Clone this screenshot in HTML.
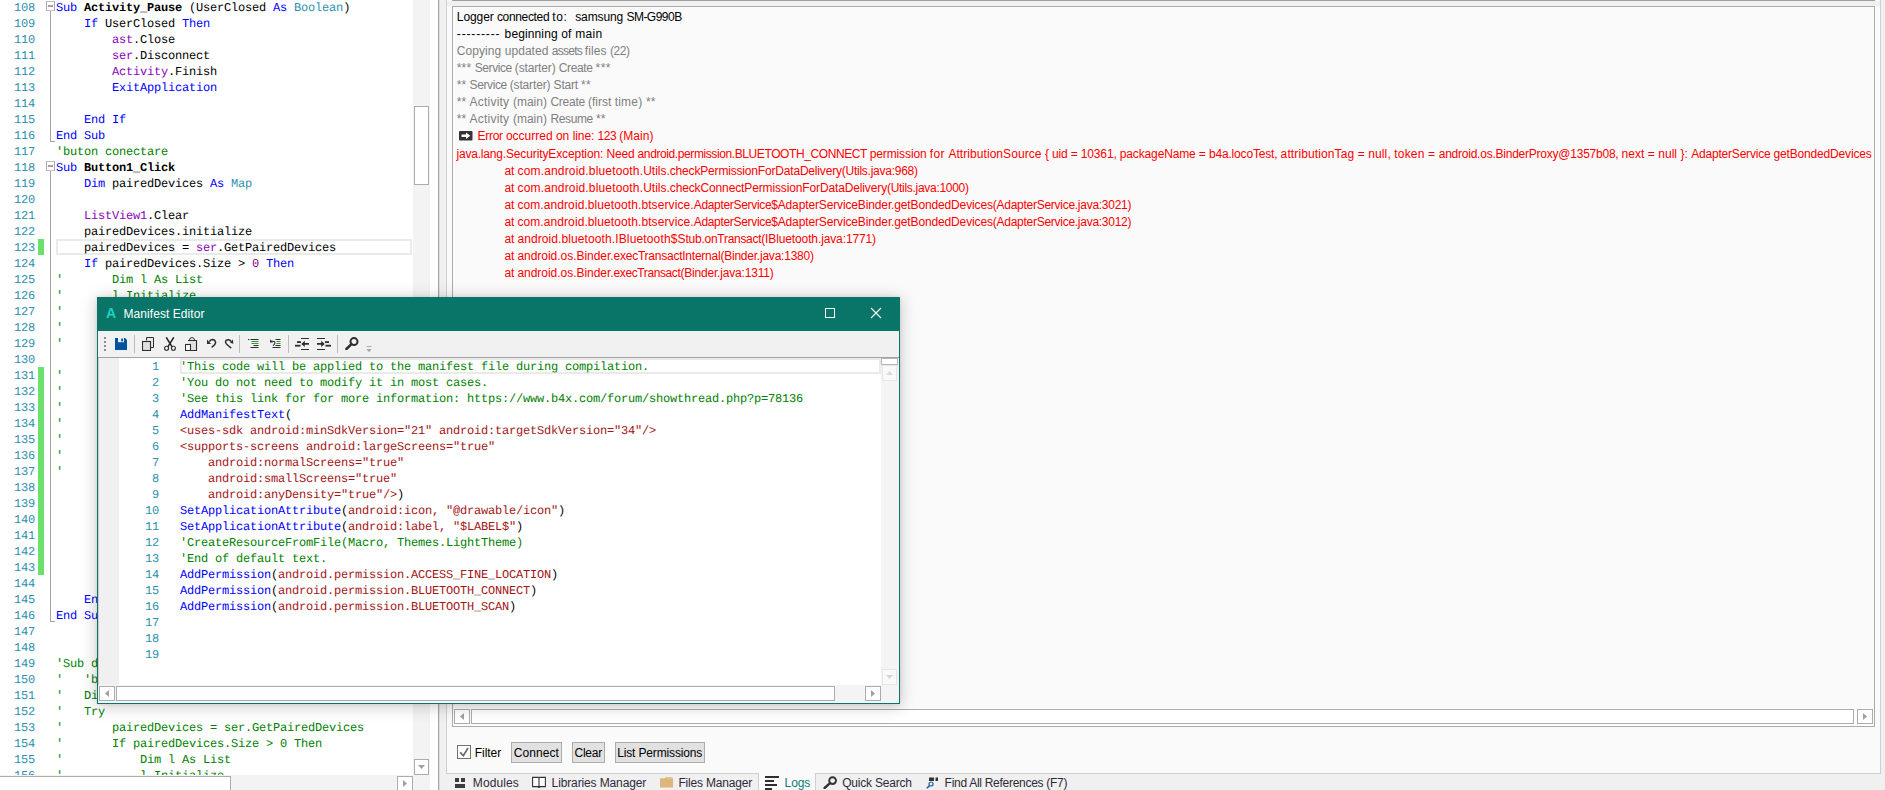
<!DOCTYPE html>
<html><head><meta charset="utf-8"><title>Manifest Editor</title>
<style>
html,body{margin:0;padding:0}
body{width:1885px;height:790px;overflow:hidden;background:#fff;position:relative;font-family:"Liberation Sans",sans-serif}
.a{position:absolute}
.m{font-family:"Liberation Mono",monospace;font-size:12px;letter-spacing:-0.2px;white-space:pre;line-height:16px;text-rendering:geometricPrecision}
.ln{position:absolute;left:0;height:16px;white-space:pre}
.num{position:absolute;color:#2b91af;text-align:right}
.kw{color:#0000ff}.ty{color:#2b91af}.id{color:#8c00be}.cm{color:#008000}.nm{color:#800080}.b{font-weight:bold}
.st{color:#a31515}
.s{font-family:"Liberation Sans",sans-serif;font-size:12px;white-space:pre;position:absolute;line-height:17px;height:17px}
.sb{background:#fff;border:1px solid #acacac;box-sizing:border-box}
</style></head><body>
<div class="a" id="ed" style="left:0;top:0;width:413px;height:775px;overflow:hidden;background:#fff"><div class="a" style="left:50px;top:11px;width:1px;height:131px;background:#a5a5a5"></div><div class="a" style="left:50px;top:141px;width:5px;height:1px;background:#a5a5a5"></div><div class="a" style="left:50px;top:171px;width:1px;height:451px;background:#a5a5a5"></div><div class="a" style="left:50px;top:621px;width:5px;height:1px;background:#a5a5a5"></div><div class="a" style="left:46px;top:1px;width:9px;height:10px;box-sizing:border-box;border:1px solid #a9a9a9;border-top-color:#c2c2c2;border-bottom-color:#c2c2c2;background:#fff"></div><div class="a" style="left:48px;top:5px;width:5px;height:2px;background:#a2a2a2"></div><div class="a" style="left:46px;top:161px;width:9px;height:10px;box-sizing:border-box;border:1px solid #a9a9a9;border-top-color:#c2c2c2;border-bottom-color:#c2c2c2;background:#fff"></div><div class="a" style="left:48px;top:165px;width:5px;height:2px;background:#a2a2a2"></div><div class="a" style="left:38px;top:239px;width:6px;height:16px;background:#6ce06c"></div><div class="a" style="left:38px;top:367px;width:6px;height:208px;background:#6ce06c"></div><div class="a" style="left:56px;top:239px;width:356px;height:16px;box-sizing:border-box;border:2px solid #eaeaea"></div><div class="ln m" style="top:0px"><span class="num" style="left:14px;width:21px">108</span><span class="a" style="left:56px"><span class="kw">Sub</span> <span class="b">Activity_Pause</span> (UserClosed <span class="kw">As</span> <span class="ty">Boolean</span>)</span></div><div class="ln m" style="top:16px"><span class="num" style="left:14px;width:21px">109</span><span class="a" style="left:56px">    <span class="kw">If</span> UserClosed <span class="kw">Then</span></span></div><div class="ln m" style="top:32px"><span class="num" style="left:14px;width:21px">110</span><span class="a" style="left:56px">        <span class="id">ast</span>.Close</span></div><div class="ln m" style="top:48px"><span class="num" style="left:14px;width:21px">111</span><span class="a" style="left:56px">        <span class="id">ser</span>.Disconnect</span></div><div class="ln m" style="top:64px"><span class="num" style="left:14px;width:21px">112</span><span class="a" style="left:56px">        <span class="id">Activity</span>.Finish</span></div><div class="ln m" style="top:80px"><span class="num" style="left:14px;width:21px">113</span><span class="a" style="left:56px">        <span class="kw">ExitApplication</span></span></div><div class="ln m" style="top:96px"><span class="num" style="left:14px;width:21px">114</span><span class="a" style="left:56px"></span></div><div class="ln m" style="top:112px"><span class="num" style="left:14px;width:21px">115</span><span class="a" style="left:56px">    <span class="kw">End If</span></span></div><div class="ln m" style="top:128px"><span class="num" style="left:14px;width:21px">116</span><span class="a" style="left:56px"><span class="kw">End Sub</span></span></div><div class="ln m" style="top:144px"><span class="num" style="left:14px;width:21px">117</span><span class="a" style="left:56px"><span class="cm">&#x27;buton conectare</span></span></div><div class="ln m" style="top:160px"><span class="num" style="left:14px;width:21px">118</span><span class="a" style="left:56px"><span class="kw">Sub</span> <span class="b">Button1_Click</span></span></div><div class="ln m" style="top:176px"><span class="num" style="left:14px;width:21px">119</span><span class="a" style="left:56px">    <span class="kw">Dim</span> pairedDevices <span class="kw">As</span> <span class="ty">Map</span></span></div><div class="ln m" style="top:192px"><span class="num" style="left:14px;width:21px">120</span><span class="a" style="left:56px"></span></div><div class="ln m" style="top:208px"><span class="num" style="left:14px;width:21px">121</span><span class="a" style="left:56px">    <span class="id">ListView1</span>.Clear</span></div><div class="ln m" style="top:224px"><span class="num" style="left:14px;width:21px">122</span><span class="a" style="left:56px">    pairedDevices.initialize</span></div><div class="ln m" style="top:240px"><span class="num" style="left:14px;width:21px">123</span><span class="a" style="left:56px">    pairedDevices = <span class="id">ser</span>.GetPairedDevices</span></div><div class="ln m" style="top:256px"><span class="num" style="left:14px;width:21px">124</span><span class="a" style="left:56px">    <span class="kw">If</span> pairedDevices.Size &gt; <span class="nm">0</span> <span class="kw">Then</span></span></div><div class="ln m" style="top:272px"><span class="num" style="left:14px;width:21px">125</span><span class="a" style="left:56px"><span class="cm">&#x27;       Dim l As List</span></span></div><div class="ln m" style="top:288px"><span class="num" style="left:14px;width:21px">126</span><span class="a" style="left:56px"><span class="cm">&#x27;       l.Initialize</span></span></div><div class="ln m" style="top:304px"><span class="num" style="left:14px;width:21px">127</span><span class="a" style="left:56px"><span class="cm">&#x27;</span></span></div><div class="ln m" style="top:320px"><span class="num" style="left:14px;width:21px">128</span><span class="a" style="left:56px"><span class="cm">&#x27;</span></span></div><div class="ln m" style="top:336px"><span class="num" style="left:14px;width:21px">129</span><span class="a" style="left:56px"><span class="cm">&#x27;</span></span></div><div class="ln m" style="top:352px"><span class="num" style="left:14px;width:21px">130</span><span class="a" style="left:56px"></span></div><div class="ln m" style="top:368px"><span class="num" style="left:14px;width:21px">131</span><span class="a" style="left:56px"><span class="cm">&#x27;</span></span></div><div class="ln m" style="top:384px"><span class="num" style="left:14px;width:21px">132</span><span class="a" style="left:56px"><span class="cm">&#x27;</span></span></div><div class="ln m" style="top:400px"><span class="num" style="left:14px;width:21px">133</span><span class="a" style="left:56px"><span class="cm">&#x27;</span></span></div><div class="ln m" style="top:416px"><span class="num" style="left:14px;width:21px">134</span><span class="a" style="left:56px"><span class="cm">&#x27;</span></span></div><div class="ln m" style="top:432px"><span class="num" style="left:14px;width:21px">135</span><span class="a" style="left:56px"><span class="cm">&#x27;</span></span></div><div class="ln m" style="top:448px"><span class="num" style="left:14px;width:21px">136</span><span class="a" style="left:56px"><span class="cm">&#x27;</span></span></div><div class="ln m" style="top:464px"><span class="num" style="left:14px;width:21px">137</span><span class="a" style="left:56px"><span class="cm">&#x27;</span></span></div><div class="ln m" style="top:480px"><span class="num" style="left:14px;width:21px">138</span><span class="a" style="left:56px"></span></div><div class="ln m" style="top:496px"><span class="num" style="left:14px;width:21px">139</span><span class="a" style="left:56px"></span></div><div class="ln m" style="top:512px"><span class="num" style="left:14px;width:21px">140</span><span class="a" style="left:56px"></span></div><div class="ln m" style="top:528px"><span class="num" style="left:14px;width:21px">141</span><span class="a" style="left:56px"></span></div><div class="ln m" style="top:544px"><span class="num" style="left:14px;width:21px">142</span><span class="a" style="left:56px"></span></div><div class="ln m" style="top:560px"><span class="num" style="left:14px;width:21px">143</span><span class="a" style="left:56px"></span></div><div class="ln m" style="top:576px"><span class="num" style="left:14px;width:21px">144</span><span class="a" style="left:56px"></span></div><div class="ln m" style="top:592px"><span class="num" style="left:14px;width:21px">145</span><span class="a" style="left:56px">    <span class="kw">En</span></span></div><div class="ln m" style="top:608px"><span class="num" style="left:14px;width:21px">146</span><span class="a" style="left:56px"><span class="kw">End Su</span></span></div><div class="ln m" style="top:624px"><span class="num" style="left:14px;width:21px">147</span><span class="a" style="left:56px"></span></div><div class="ln m" style="top:640px"><span class="num" style="left:14px;width:21px">148</span><span class="a" style="left:56px"></span></div><div class="ln m" style="top:656px"><span class="num" style="left:14px;width:21px">149</span><span class="a" style="left:56px"><span class="cm">&#x27;Sub d</span></span></div><div class="ln m" style="top:672px"><span class="num" style="left:14px;width:21px">150</span><span class="a" style="left:56px"><span class="cm">&#x27;   &#x27;b</span></span></div><div class="ln m" style="top:688px"><span class="num" style="left:14px;width:21px">151</span><span class="a" style="left:56px"><span class="cm">&#x27;   Di</span></span></div><div class="ln m" style="top:704px"><span class="num" style="left:14px;width:21px">152</span><span class="a" style="left:56px"><span class="cm">&#x27;   Try</span></span></div><div class="ln m" style="top:720px"><span class="num" style="left:14px;width:21px">153</span><span class="a" style="left:56px"><span class="cm">&#x27;       pairedDevices = ser.GetPairedDevices</span></span></div><div class="ln m" style="top:736px"><span class="num" style="left:14px;width:21px">154</span><span class="a" style="left:56px"><span class="cm">&#x27;       If pairedDevices.Size &gt; 0 Then</span></span></div><div class="ln m" style="top:752px"><span class="num" style="left:14px;width:21px">155</span><span class="a" style="left:56px"><span class="cm">&#x27;           Dim l As List</span></span></div><div class="ln m" style="top:768px"><span class="num" style="left:14px;width:21px">156</span><span class="a" style="left:56px"><span class="cm">&#x27;           l.Initialize</span></span></div></div><div class="a" style="left:413px;top:0;width:17px;height:790px;background:#f3f3f3"></div><div class="a sb" style="left:414px;top:106px;width:15px;height:79px"></div><div class="a sb" style="left:414px;top:759px;width:15px;height:16px"></div><svg class="a" style="left:418px;top:765px" width="8" height="5"><path d="M0 0H7L3.5 4Z" fill="#a0a0a0"/></svg><div class="a" style="left:0;top:775px;width:413px;height:15px;background:#f3f3f3"></div><div class="a sb" style="left:-1px;top:776px;width:232px;height:16px"></div><div class="a sb" style="left:397px;top:776px;width:16px;height:16px"></div><svg class="a" style="left:403px;top:780px" width="5" height="8"><path d="M0 0V7L4 3.5Z" fill="#a0a0a0"/></svg><div class="a" style="left:430px;top:0;width:8px;height:790px;background:#fff"></div><div class="a" style="left:438px;top:0;width:1447px;height:790px;background:#f0f0f0"></div><div class="a" style="left:438px;top:0;width:1px;height:790px;background:#a6a6a6"></div><div class="a" style="left:439px;top:0;width:1px;height:790px;background:#dcdcdc"></div><div class="a" style="left:446px;top:-1px;width:1435px;height:775px;box-sizing:border-box;border:1px solid #cfcfcf;background:#fafafa"></div><div class="a" style="left:447px;top:1px;width:1433px;height:5px;background:#f0f0f0"></div><div class="a" style="left:452px;top:0;width:1423px;height:1px;background:#a0a0a0"></div><div class="a" style="left:452px;top:6px;width:1423px;height:721px;box-sizing:border-box;border:1px solid #ababab;background:#fafafa"></div><div class="a" style="left:453px;top:708px;width:1421px;height:18px;background:#fdfdfd"></div><div class="a sb" style="left:454px;top:709px;width:16px;height:15px"></div><svg class="a" style="left:460px;top:713px" width="5" height="8"><path d="M4 0V7L0 3.5Z" fill="#a0a0a0"/></svg><div class="a sb" style="left:471px;top:709px;width:1383px;height:15px"></div><div class="a sb" style="left:1857px;top:709px;width:16px;height:15px"></div><svg class="a" style="left:1863px;top:713px" width="5" height="8"><path d="M0 0V7L4 3.5Z" fill="#a0a0a0"/></svg><div class="s" style="left:456.8px;top:9px;color:#000;letter-spacing:-0.086px">Logger </div><div class="s" style="left:496.9px;top:9px;color:#000;letter-spacing:-0.332px">connected </div><div class="s" style="left:552.3px;top:9px;color:#000;letter-spacing:0.577px">to:  </div><div class="s" style="left:575.2px;top:9px;color:#000;letter-spacing:-0.104px">samsung </div><div class="s" style="left:626.4px;top:9px;color:#000;letter-spacing:-0.507px">SM-G990B</div><div class="s" style="left:456.8px;top:26px;color:#000;letter-spacing:0.849px">--------- </div><div class="s" style="left:504.6px;top:26px;color:#000;letter-spacing:0.121px">beginning </div><div class="s" style="left:561.2px;top:26px;color:#000;letter-spacing:0.219px">of </div><div class="s" style="left:575.2px;top:26px;color:#000;letter-spacing:0.346px">main</div><div class="s" style="left:456.8px;top:43px;color:#808080;letter-spacing:0.078px">Copying </div><div class="s" style="left:504.8px;top:43px;color:#808080;letter-spacing:0.023px">updated </div><div class="s" style="left:551.7px;top:43px;color:#808080;letter-spacing:-0.702px">assets </div><div class="s" style="left:584.8px;top:43px;color:#808080;letter-spacing:0.069px">files </div><div class="s" style="left:609.9px;top:43px;color:#808080;letter-spacing:-0.436px">(22)</div><div class="s" style="left:456.8px;top:60px;color:#808080;letter-spacing:0.139px">*** </div><div class="s" style="left:474.7px;top:60px;color:#808080;letter-spacing:-0.407px">Service </div><div class="s" style="left:514.8px;top:60px;color:#808080;letter-spacing:-0.144px">(starter) </div><div class="s" style="left:558.7px;top:60px;color:#808080;letter-spacing:-0.351px">Create </div><div class="s" style="left:595.6px;top:60px;color:#808080;letter-spacing:0.428px">***</div><div class="s" style="left:456.8px;top:77px;color:#808080;letter-spacing:0.037px">** </div><div class="s" style="left:469.6px;top:77px;color:#808080;letter-spacing:-0.407px">Service </div><div class="s" style="left:509.7px;top:77px;color:#808080;letter-spacing:-0.144px">(starter) </div><div class="s" style="left:553.6px;top:77px;color:#808080;letter-spacing:-0.215px">Start </div><div class="s" style="left:581.0px;top:77px;color:#808080;letter-spacing:0.278px">**</div><div class="s" style="left:456.8px;top:94px;color:#808080;letter-spacing:0.037px">** </div><div class="s" style="left:469.6px;top:94px;color:#808080;letter-spacing:0.217px">Activity </div><div class="s" style="left:512.9px;top:94px;color:#808080;letter-spacing:0.022px">(main) </div><div class="s" style="left:550.4px;top:94px;color:#808080;letter-spacing:-0.251px">Create </div><div class="s" style="left:588.0px;top:94px;color:#808080;letter-spacing:0.004px">(first </div><div class="s" style="left:614.7px;top:94px;color:#808080;letter-spacing:0.200px">time) </div><div class="s" style="left:645.9px;top:94px;color:#808080;letter-spacing:0.278px">**</div><div class="s" style="left:456.8px;top:111px;color:#808080;letter-spacing:0.037px">** </div><div class="s" style="left:469.6px;top:111px;color:#808080;letter-spacing:0.217px">Activity </div><div class="s" style="left:512.9px;top:111px;color:#808080;letter-spacing:0.022px">(main) </div><div class="s" style="left:550.4px;top:111px;color:#808080;letter-spacing:-0.362px">Resume </div><div class="s" style="left:595.9px;top:111px;color:#808080;letter-spacing:0.278px">**</div><div class="s" style="left:477.5px;top:128px;color:#ff0000;letter-spacing:-0.267px">Error </div><div class="s" style="left:505.9px;top:128px;color:#ff0000;letter-spacing:-0.003px">occurred </div><div class="s" style="left:555.9px;top:128px;color:#ff0000;letter-spacing:0.037px">on </div><div class="s" style="left:572.7px;top:128px;color:#ff0000;letter-spacing:-0.093px">line: </div><div class="s" style="left:597.5px;top:128px;color:#ff0000;letter-spacing:-0.415px">123 </div><div class="s" style="left:619.2px;top:128px;color:#ff0000;letter-spacing:0.081px">(Main)</div><div class="s" style="left:456.5px;top:146px;color:#ff0000;letter-spacing:-0.198px">java.lang.</div><div class="s" style="left:505.9px;top:146px;color:#ff0000;letter-spacing:-0.112px">SecurityException: </div><div class="s" style="left:606.5px;top:146px;color:#ff0000;letter-spacing:-0.186px">Need </div><div class="s" style="left:637.6px;top:146px;color:#ff0000;letter-spacing:-0.402px">android.permission.BLUETOOTH_CONNECT </div><div class="s" style="left:869.7px;top:146px;color:#ff0000;letter-spacing:-0.114px">permission </div><div class="s" style="left:929.8px;top:146px;color:#ff0000;letter-spacing:0.314px">for </div><div class="s" style="left:948.4px;top:146px;color:#ff0000;letter-spacing:0.062px">AttributionSource </div><div class="s" style="left:1044.9px;top:146px;color:#ff0000;letter-spacing:-0.145px">{ uid = 10361, </div><div class="s" style="left:1119.8px;top:146px;color:#ff0000;letter-spacing:-0.140px">packageName = </div><div class="s" style="left:1208.9px;top:146px;color:#ff0000;letter-spacing:-0.168px">b4a.locoTest, </div><div class="s" style="left:1280.6px;top:146px;color:#ff0000;letter-spacing:0.114px">attributionTag = null, </div><div class="s" style="left:1394.3px;top:146px;color:#ff0000;letter-spacing:0.171px">token = </div><div class="s" style="left:1438.7px;top:146px;color:#ff0000;letter-spacing:-0.232px">android.os.BinderProxy@1357b08, </div><div class="s" style="left:1621.6px;top:146px;color:#ff0000;letter-spacing:0.037px">next = null }: </div><div class="s" style="left:1691.2px;top:146px;color:#ff0000;letter-spacing:-0.199px">AdapterService </div><div class="s" style="left:1773.6px;top:146px;color:#ff0000;letter-spacing:-0.171px">getBondedDevices</div><div class="s" style="left:504.5px;top:163px;color:#ff0000;letter-spacing:-0.115px">at </div><div class="s" style="left:517.5px;top:163px;color:#ff0000;letter-spacing:0.164px">com.android.bluetooth.</div><div class="s" style="left:643.2px;top:163px;color:#ff0000;letter-spacing:-0.012px">Utils.</div><div class="s" style="left:669.8px;top:163px;color:#ff0000;letter-spacing:-0.180px">checkPermissionForDataDelivery</div><div class="s" style="left:841.8px;top:163px;color:#ff0000;letter-spacing:-0.258px">(Utils.java:968)</div><div class="s" style="left:504.5px;top:180px;color:#ff0000;letter-spacing:-0.115px">at </div><div class="s" style="left:517.5px;top:180px;color:#ff0000;letter-spacing:0.164px">com.android.bluetooth.</div><div class="s" style="left:643.2px;top:180px;color:#ff0000;letter-spacing:-0.012px">Utils.</div><div class="s" style="left:669.8px;top:180px;color:#ff0000;letter-spacing:-0.132px">checkConnectPermissionForDataDelivery</div><div class="s" style="left:887.0px;top:180px;color:#ff0000;letter-spacing:-0.294px">(Utils.java:1000)</div><div class="s" style="left:504.5px;top:197px;color:#ff0000;letter-spacing:-0.148px">at </div><div class="s" style="left:517.4px;top:197px;color:#ff0000;letter-spacing:0.089px">com.android.bluetooth.btservice.</div><div class="s" style="left:693.7px;top:197px;color:#ff0000;letter-spacing:-0.315px">AdapterService$</div><div class="s" style="left:777.7px;top:197px;color:#ff0000;letter-spacing:-0.134px">AdapterServiceBinder.</div><div class="s" style="left:894.3px;top:197px;color:#ff0000;letter-spacing:-0.140px">getBondedDevices</div><div class="s" style="left:992.8px;top:197px;color:#ff0000;letter-spacing:-0.270px">(AdapterService.java:3021)</div><div class="s" style="left:504.5px;top:214px;color:#ff0000;letter-spacing:-0.148px">at </div><div class="s" style="left:517.4px;top:214px;color:#ff0000;letter-spacing:0.089px">com.android.bluetooth.btservice.</div><div class="s" style="left:693.7px;top:214px;color:#ff0000;letter-spacing:-0.315px">AdapterService$</div><div class="s" style="left:777.7px;top:214px;color:#ff0000;letter-spacing:-0.134px">AdapterServiceBinder.</div><div class="s" style="left:894.3px;top:214px;color:#ff0000;letter-spacing:-0.140px">getBondedDevices</div><div class="s" style="left:992.8px;top:214px;color:#ff0000;letter-spacing:-0.270px">(AdapterService.java:3012)</div><div class="s" style="left:504.5px;top:231px;color:#ff0000;letter-spacing:-0.148px">at </div><div class="s" style="left:517.4px;top:231px;color:#ff0000;letter-spacing:0.096px">android.bluetooth.</div><div class="s" style="left:615.2px;top:231px;color:#ff0000;letter-spacing:0.153px">IBluetooth$</div><div class="s" style="left:677.6px;top:231px;color:#ff0000;letter-spacing:-0.206px">Stub.</div><div class="s" style="left:704.6px;top:231px;color:#ff0000;letter-spacing:-0.299px">onTransact</div><div class="s" style="left:761.2px;top:231px;color:#ff0000;letter-spacing:-0.119px">(IBluetooth.java:1771)</div><div class="s" style="left:504.5px;top:248px;color:#ff0000;letter-spacing:-0.148px">at </div><div class="s" style="left:517.4px;top:248px;color:#ff0000;letter-spacing:-0.025px">android.os.</div><div class="s" style="left:576.5px;top:248px;color:#ff0000;letter-spacing:-0.051px">Binder.</div><div class="s" style="left:613.5px;top:248px;color:#ff0000;letter-spacing:-0.235px">execTransactInternal</div><div class="s" style="left:720.4px;top:248px;color:#ff0000;letter-spacing:-0.223px">(Binder.java:1380)</div><div class="s" style="left:504.5px;top:265px;color:#ff0000;letter-spacing:-0.148px">at </div><div class="s" style="left:517.4px;top:265px;color:#ff0000;letter-spacing:-0.025px">android.os.</div><div class="s" style="left:576.5px;top:265px;color:#ff0000;letter-spacing:-0.051px">Binder.</div><div class="s" style="left:613.5px;top:265px;color:#ff0000;letter-spacing:-0.391px">execTransact</div><div class="s" style="left:680.4px;top:265px;color:#ff0000;letter-spacing:-0.184px">(Binder.java:1311)</div><svg class="a" style="left:459px;top:131px" width="14" height="10" viewBox="0 0 14 10"><rect x="0" y="0" width="13.5" height="9.5" rx="1" fill="#333"/><path d="M2.5 3.6H7V1.6L11.3 4.8L7 8V6H2.5Z" fill="#fff"/></svg><div class="a" style="left:457px;top:745px;width:14px;height:14px;box-sizing:border-box;border:1px solid #707070;background:#fff"></div><svg class="a" style="left:457px;top:745px" width="14" height="14"><path d="M3.1 7.3L6.4 10.7L11 3" stroke="#6a6a6a" stroke-width="1.7" fill="none"/></svg><div class="s" style="left:474.7px;top:745px;color:#000;letter-spacing:-0.029px;">Filter</div><div class="a" style="left:511px;top:742px;width:51px;height:21px;box-sizing:border-box;border:1px solid #adadad;background:#e1e1e1"></div><div class="s" style="left:513.7px;top:745px;color:#000;letter-spacing:0.071px;">Connect</div><div class="a" style="left:572px;top:742px;width:33px;height:21px;box-sizing:border-box;border:1px solid #adadad;background:#e1e1e1"></div><div class="s" style="left:574.6px;top:745px;color:#000;letter-spacing:-0.277px;">Clear</div><div class="a" style="left:615px;top:742px;width:90px;height:21px;box-sizing:border-box;border:1px solid #adadad;background:#e1e1e1"></div><div class="s" style="left:617.2px;top:745px;color:#000;letter-spacing:-0.147px;">List Permissions</div><div class="a" style="left:758px;top:773px;width:58px;height:17px;background:#fafafa;border-left:1px solid #cfcfcf;border-right:1px solid #cfcfcf;box-sizing:border-box"></div><div class="s" style="left:472.8px;top:775px;color:#2f2a38;letter-spacing:0.106px;">Modules</div><div class="s" style="left:551.6px;top:775px;color:#2f2a38;letter-spacing:-0.125px;">Libraries Manager</div><div class="s" style="left:678.4000000000001px;top:775px;color:#2f2a38;letter-spacing:-0.172px;">Files Manager</div><div class="s" style="left:784.6px;top:775px;color:#0b7c74;letter-spacing:-0.108px;">Logs</div><div class="s" style="left:842.2px;top:775px;color:#2f2a38;letter-spacing:-0.211px;">Quick Search</div><div class="s" style="left:944.6px;top:775px;color:#2f2a38;letter-spacing:-0.283px;">Find All References (F7)</div><svg class="a" style="left:455px;top:778px" width="10" height="10"><rect x="0" y="0" width="4" height="4" fill="#3c3c3c"/><rect x="6" y="0" width="4" height="4" fill="#3c3c3c"/><rect x="0" y="6" width="10" height="4" fill="#3c3c3c"/></svg><svg class="a" style="left:532px;top:776px" width="14" height="12" viewBox="0 0 14 12"><path d="M0.6 1.4H6.2Q7 1.4 7 2.2V10.6H0.6ZM7 2.2Q7 1.4 7.8 1.4H13.4V10.6H7" fill="#fff" stroke="#333" stroke-width="1.1"/><path d="M6.2 10.6V11.6H7.8V10.6" fill="#333" stroke="#333" stroke-width=".6"/></svg><svg class="a" style="left:660px;top:776px" width="14" height="12" viewBox="0 0 14 12"><path d="M0 2.2H5L6 1H12.3V2.2H13V11.6H0Z" fill="#dcb67a"/><path d="M6.2 1.9H12" stroke="#efd9b0" stroke-width=".8"/></svg><svg class="a" style="left:765px;top:776px" width="14" height="14"><rect x="0" y="0" width="14" height="2" fill="#2f2f2f"/><rect x="0" y="4" width="9" height="2" fill="#2f2f2f"/><rect x="0" y="8" width="12" height="2" fill="#2f2f2f"/><rect x="0" y="12" width="7" height="2" fill="#2f2f2f"/></svg><svg class="a" style="left:823px;top:776px" width="15" height="13" viewBox="0 0 15 13"><circle cx="9.6" cy="4.6" r="3.4" fill="none" stroke="#333" stroke-width="1.9"/><path d="M7 7.2L1.6 12" stroke="#333" stroke-width="2.4" stroke-linecap="round"/></svg><svg class="a" style="left:926px;top:777px" width="13" height="12" viewBox="0 0 13 12"><rect x="3" y="0.5" width="5" height="3.5" fill="#333"/><rect x="9.5" y="0.5" width="2.5" height="3.5" fill="#333"/><circle cx="5" cy="7" r="2" fill="none" stroke="#1e5aa8" stroke-width="1.2"/><path d="M3.6 8.6L0.8 11.2" stroke="#1e5aa8" stroke-width="1.5"/></svg><div class="a" id="win" style="left:97px;top:297px;width:803px;height:407px;box-sizing:border-box;border:1px solid #087568;border-top:none;background:#f0f0f0;box-shadow:0 2px 15px 1px rgba(0,0,0,.2),0 0 3px rgba(0,0,0,.1)"><div class="a" style="left:-1px;top:0;width:803px;height:34px;background:#087568"></div><div class="a" style="left:8px;top:8px;font:bold 14px 'Liberation Sans', sans-serif;color:#20d0be;line-height:16px">A</div><div class="s" style="left:25.5px;top:9px;color:#fff;letter-spacing:0.064px">Manifest Editor</div><div class="a" style="left:727px;top:11px;width:10px;height:10px;box-sizing:border-box;border:1px solid #fff"></div><svg class="a" style="left:772px;top:10px" width="12" height="12"><path d="M1 1L11 11M11 1L1 11" stroke="#fff" stroke-width="1.1"/></svg><div class="a" style="left:0;top:34px;width:801px;height:26px;background:#f1f1f1"></div><div class="a" style="left:6px;top:40px;width:2px;height:2px;background:#8a8a8a"></div><div class="a" style="left:6px;top:44px;width:2px;height:2px;background:#8a8a8a"></div><div class="a" style="left:6px;top:48px;width:2px;height:2px;background:#8a8a8a"></div><div class="a" style="left:6px;top:52px;width:2px;height:2px;background:#8a8a8a"></div><div class="a" style="left:36px;top:38px;width:1px;height:18px;background:#bdbdbd"></div><div class="a" style="left:141px;top:38px;width:1px;height:18px;background:#bdbdbd"></div><div class="a" style="left:190px;top:38px;width:1px;height:18px;background:#bdbdbd"></div><div class="a" style="left:239px;top:38px;width:1px;height:18px;background:#bdbdbd"></div><svg class="a" style="left:17px;top:41px" width="12" height="12" viewBox="0 0 12 12"><path d="M0 0H10L12 2V12H0Z" fill="#00539c"/><rect x="3" y="0" width="6" height="4.2" fill="#e6eef7"/><rect x="6.2" y="0.6" width="1.8" height="2.8" fill="#00539c"/></svg><svg class="a" style="left:44px;top:40px" width="12" height="14" viewBox="0 0 12 14"><path d="M4.5 3.5V0.5H11.5V10.5H8.5" fill="none" stroke="#2d2d2d" stroke-width="1"/><path d="M5 1H11V10H8.5V4H5Z" fill="#e9e9e9"/><rect x="0.5" y="4.5" width="8" height="9" fill="#e0e0e0" stroke="#2d2d2d" stroke-width="1.1"/></svg><svg class="a" style="left:66px;top:40px" width="12" height="14" viewBox="0 0 12 14"><path d="M2.2 0.3L8.3 10.2M9.8 0.3L3.7 10.2" stroke="#2d2d2d" stroke-width="1.6" fill="none"/><circle cx="2.6" cy="11.3" r="2" fill="none" stroke="#2d2d2d" stroke-width="1.1"/><circle cx="9.4" cy="11.3" r="2" fill="none" stroke="#2d2d2d" stroke-width="1.1"/></svg><svg class="a" style="left:87px;top:40px" width="13" height="14" viewBox="0 0 13 14"><path d="M4.5 3.2Q4.5 0.6 7 0.6Q9.5 0.6 9.5 3.2" fill="none" stroke="#2d2d2d" stroke-width="1"/><path d="M3 3.5H11.5V13.5H6" fill="#e2e2e2" stroke="#2d2d2d" stroke-width="1.1"/><rect x="0.5" y="7.5" width="5" height="6" fill="#fff" stroke="#2d2d2d" stroke-width="1.1"/></svg><svg class="a" style="left:102px;top:36px" width="40" height="22" viewBox="0 0 40 22"><path d="M7 6.6V10.9H11Z" fill="#2d2d2d"/><path d="M9.3 8.6Q10.4 6.4 12.3 6.4Q15.6 6.6 15.6 9.8Q15.4 11.9 11.6 14.3" fill="none" stroke="#2d2d2d" stroke-width="1.5"/><path d="M32.9 6.6L33.4 10.7L30 9.7Z" fill="#2d2d2d"/><path d="M31.2 8.6Q30 6.5 28.2 6.7Q25.3 7 25.6 9.5Q25.8 10.9 31.2 15.2" fill="none" stroke="#2d2d2d" stroke-width="1.5"/></svg><svg class="a" style="left:150px;top:42px" width="11" height="10" viewBox="0 0 11 10"><rect x="0" y="0" width="1.4" height="1" fill="#2d2d2d"/><rect x="2.5" y="0" width="8" height="1" fill="#2d2d2d"/><rect x="3.5" y="2" width="7" height="1" fill="#2e9a2e"/><rect x="3.5" y="4" width="7" height="1" fill="#2e9a2e"/><rect x="5.5" y="6" width="5" height="1" fill="#2d2d2d"/><rect x="2.5" y="8" width="8" height="1" fill="#2d2d2d"/></svg><svg class="a" style="left:172px;top:41px" width="11" height="11" viewBox="0 0 11 11"><path d="M1.2 3.2H3.2Q5 3.2 5 4.8Q5 6 3 7.6" fill="none" stroke="#2d2d2d" stroke-width="1.1"/><path d="M0 1.2V4.4H3.2Z" fill="#2d2d2d"/><rect x="5.5" y="1" width="5" height="1" fill="#2d2d2d"/><rect x="6.5" y="3" width="4" height="1" fill="#2e9a2e"/><rect x="6.5" y="5" width="4" height="1" fill="#2e9a2e"/><rect x="5.5" y="7" width="5" height="1" fill="#2d2d2d"/><rect x="2.5" y="9" width="8" height="1" fill="#2d2d2d"/></svg><svg class="a" style="left:197px;top:41px" width="14" height="12" viewBox="0 0 14 12"><rect x="6" y="0" width="8" height="1" fill="#2d2d2d"/><rect x="6" y="11" width="8" height="1" fill="#2d2d2d"/><rect x="2" y="3.2" width="4" height="1.8" fill="#2d2d2d"/><rect x="0" y="6.8" width="5.5" height="1.8" fill="#2d2d2d"/><path d="M14 5H9.8V2.8L6.2 5.9L9.8 9V6.8H14Z" fill="#2d2d2d"/></svg><svg class="a" style="left:219px;top:41px" width="14" height="12" viewBox="0 0 14 12"><rect x="0" y="0" width="8" height="1" fill="#2d2d2d"/><rect x="0" y="11" width="8" height="1" fill="#2d2d2d"/><rect x="8" y="3.2" width="4" height="1.8" fill="#2d2d2d"/><rect x="8.5" y="6.8" width="5.5" height="1.8" fill="#2d2d2d"/><path d="M0 5H4.2V2.8L7.8 5.9L4.2 9V6.8H0Z" fill="#2d2d2d"/></svg><svg class="a" style="left:247px;top:40px" width="14" height="13" viewBox="0 0 14 13"><circle cx="9" cy="4.6" r="3.5" fill="none" stroke="#2d2d2d" stroke-width="2"/><path d="M6.4 7.2L1.4 12" stroke="#2d2d2d" stroke-width="2.5" stroke-linecap="round"/></svg><svg class="a" style="left:268px;top:49px" width="6" height="7" viewBox="0 0 6 7"><rect x="0.5" y="0" width="5" height="1" fill="#b0b0b0"/><path d="M0.3 3H5.7L3 6.2Z" fill="#a8a8a8"/></svg><div class="a" style="left:0;top:60px;width:801px;height:1px;background:#a3a3a3"></div><div class="a" style="left:0;top:61px;width:783px;height:327px;background:#fff;overflow:hidden"><div class="a" style="left:0;top:0;width:21px;height:400px;background:#f0f0f0"></div><div class="a" style="left:82px;top:0;width:701px;height:16px;box-sizing:border-box;border:2px solid #eaeaea"></div><div class="ln m" style="top:1px"><span class="num" style="left:32px;width:29px">1</span><span class="a" style="left:82px"><span class="cm">&#x27;This code will be applied to the manifest file during compilation.</span></span></div><div class="ln m" style="top:17px"><span class="num" style="left:32px;width:29px">2</span><span class="a" style="left:82px"><span class="cm">&#x27;You do not need to modify it in most cases.</span></span></div><div class="ln m" style="top:33px"><span class="num" style="left:32px;width:29px">3</span><span class="a" style="left:82px"><span class="cm">&#x27;See this link for for more information: https://www.b4x.com/forum/showthread.php?p=78136</span></span></div><div class="ln m" style="top:49px"><span class="num" style="left:32px;width:29px">4</span><span class="a" style="left:82px"><span class="kw">AddManifestText</span>(</span></div><div class="ln m" style="top:65px"><span class="num" style="left:32px;width:29px">5</span><span class="a" style="left:82px"><span class="st">&lt;uses-sdk android:minSdkVersion=&quot;21&quot; android:targetSdkVersion=&quot;34&quot;/&gt;</span></span></div><div class="ln m" style="top:81px"><span class="num" style="left:32px;width:29px">6</span><span class="a" style="left:82px"><span class="st">&lt;supports-screens android:largeScreens=&quot;true&quot;</span></span></div><div class="ln m" style="top:97px"><span class="num" style="left:32px;width:29px">7</span><span class="a" style="left:82px"><span class="st">    android:normalScreens=&quot;true&quot;</span></span></div><div class="ln m" style="top:113px"><span class="num" style="left:32px;width:29px">8</span><span class="a" style="left:82px"><span class="st">    android:smallScreens=&quot;true&quot;</span></span></div><div class="ln m" style="top:129px"><span class="num" style="left:32px;width:29px">9</span><span class="a" style="left:82px"><span class="st">    android:anyDensity=&quot;true&quot;/&gt;</span>)</span></div><div class="ln m" style="top:145px"><span class="num" style="left:32px;width:29px">10</span><span class="a" style="left:82px"><span class="kw">SetApplicationAttribute</span>(<span class="st">android:icon, &quot;@drawable/icon&quot;</span>)</span></div><div class="ln m" style="top:161px"><span class="num" style="left:32px;width:29px">11</span><span class="a" style="left:82px"><span class="kw">SetApplicationAttribute</span>(<span class="st">android:label, &quot;$LABEL$&quot;</span>)</span></div><div class="ln m" style="top:177px"><span class="num" style="left:32px;width:29px">12</span><span class="a" style="left:82px"><span class="cm">&#x27;CreateResourceFromFile(Macro, Themes.LightTheme)</span></span></div><div class="ln m" style="top:193px"><span class="num" style="left:32px;width:29px">13</span><span class="a" style="left:82px"><span class="cm">&#x27;End of default text.</span></span></div><div class="ln m" style="top:209px"><span class="num" style="left:32px;width:29px">14</span><span class="a" style="left:82px"><span class="kw">AddPermission</span>(<span class="st">android.permission.ACCESS_FINE_LOCATION</span>)</span></div><div class="ln m" style="top:225px"><span class="num" style="left:32px;width:29px">15</span><span class="a" style="left:82px"><span class="kw">AddPermission</span>(<span class="st">android.permission.BLUETOOTH_CONNECT</span>)</span></div><div class="ln m" style="top:241px"><span class="num" style="left:32px;width:29px">16</span><span class="a" style="left:82px"><span class="kw">AddPermission</span>(<span class="st">android.permission.BLUETOOTH_SCAN</span>)</span></div><div class="ln m" style="top:257px"><span class="num" style="left:32px;width:29px">17</span><span class="a" style="left:82px"></span></div><div class="ln m" style="top:273px"><span class="num" style="left:32px;width:29px">18</span><span class="a" style="left:82px"></span></div><div class="ln m" style="top:289px"><span class="num" style="left:32px;width:29px">19</span><span class="a" style="left:82px"></span></div></div><div class="a" style="left:0;top:61px;width:1px;height:345px;background:rgba(120,110,110,.28)"></div><div class="a" style="left:783px;top:61px;width:18px;height:345px;background:#f4f4f4"></div><div class="a sb" style="left:783px;top:61px;width:17px;height:7px;border-color:#b5b5b5"></div><div class="a" style="left:784px;top:68px;width:15px;height:16px;box-sizing:border-box;border:1px solid #e6e6e6;background:#f9f9f9"></div><svg class="a" style="left:788px;top:74px" width="8" height="5"><path d="M0 4H7L3.5 0Z" fill="#dcdcdc"/></svg><div class="a" style="left:784px;top:372px;width:15px;height:16px;box-sizing:border-box;border:1px solid #e6e6e6;background:#f9f9f9"></div><svg class="a" style="left:788px;top:378px" width="8" height="5"><path d="M0 0H7L3.5 4Z" fill="#d4d4d4"/></svg><div class="a" style="left:0;top:388px;width:783px;height:18px;background:#f4f4f4"></div><div class="a sb" style="left:1px;top:389px;width:16px;height:15px"></div><svg class="a" style="left:7px;top:393px" width="5" height="8"><path d="M4 0V7L0 3.5Z" fill="#a0a0a0"/></svg><div class="a sb" style="left:18px;top:389px;width:719px;height:15px"></div><div class="a sb" style="left:767px;top:389px;width:16px;height:15px"></div><svg class="a" style="left:773px;top:393px" width="5" height="8"><path d="M0 0V7L4 3.5Z" fill="#a0a0a0"/></svg></div></body></html>
